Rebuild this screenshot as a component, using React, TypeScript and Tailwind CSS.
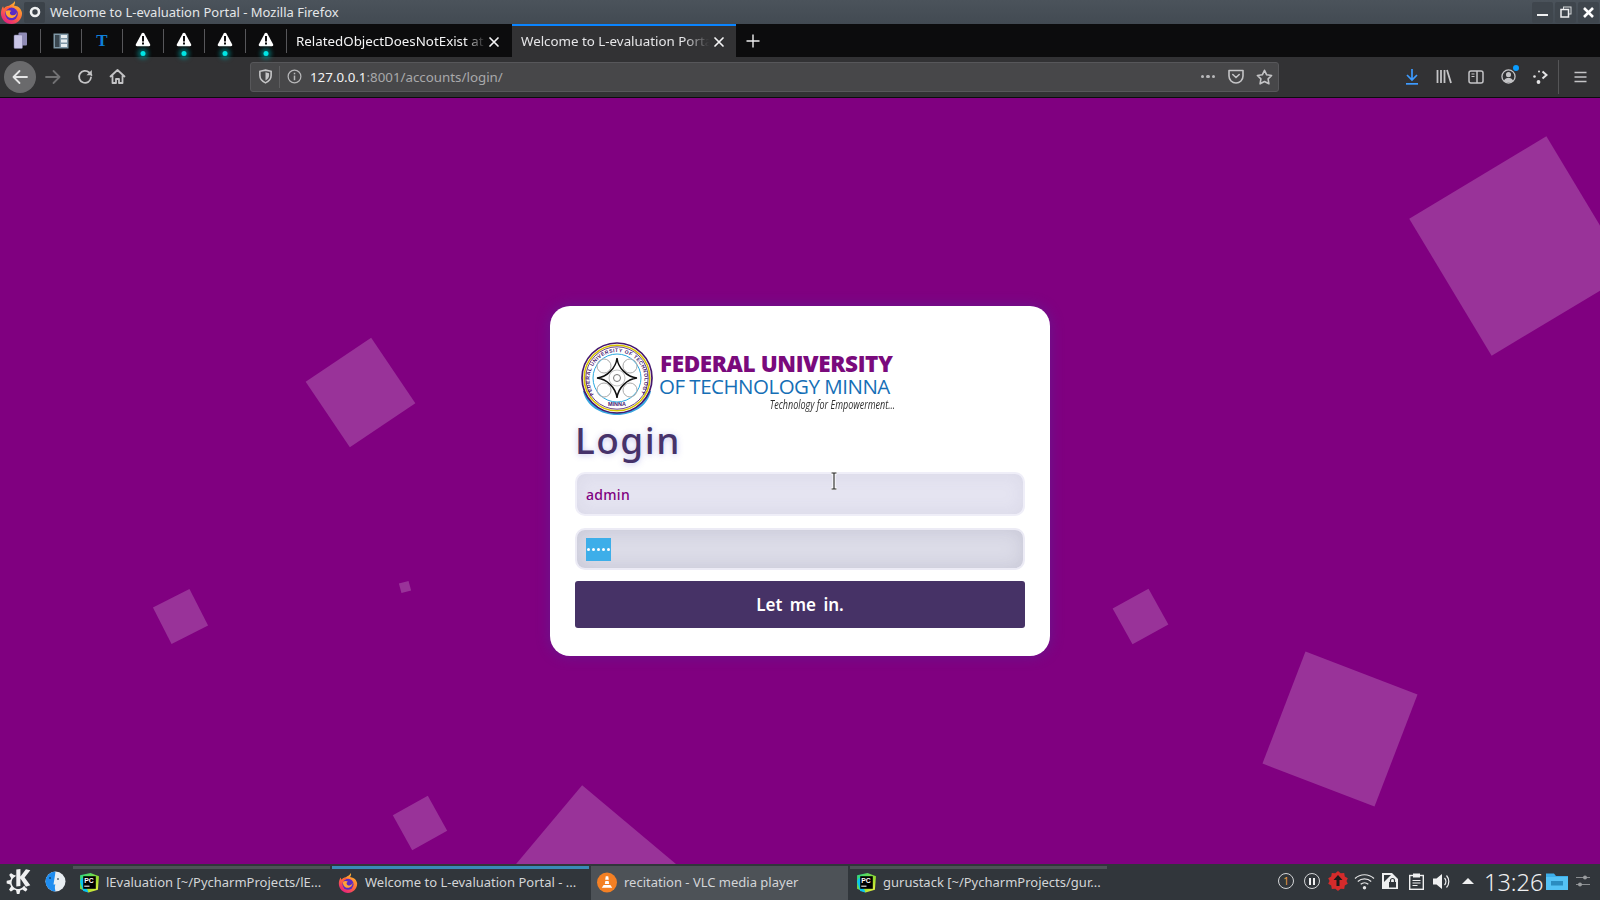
import React from "react";
import { SiKde } from "react-icons/si";

const ui = "font-['Noto_Sans',sans-serif]";

function FirefoxLogo({ size = 22, id = "a" }: { size?: number; id?: string }) {
  return (
    <svg width={size} height={size} viewBox="0 0 24 24">
      <defs>
        <linearGradient id={`ff${id}`} x1="0.8" y1="0" x2="0.2" y2="1">
          <stop offset="0" stopColor="#ffbd2e" />
          <stop offset="0.5" stopColor="#ff7139" />
          <stop offset="1" stopColor="#e31587" />
        </linearGradient>
      </defs>
      <path d="M15.500 0c.6 2.500-.3 3.700-1 4.700 3 .6 5.200 1.300 6.600 3.300.9 1.300 1.900 3.200 1.900 5C23 19 18 24 12 24 6 24 1 19 1 13c0-2.600.7-5.400 2.200-7.500l.9 2.500C5.500 6 7.500 5 9.500 5 11.500 3.500 14.500 2.500 15.500 0z" fill={`url(#ff${id})`} />
      <circle cx="12" cy="13.500" r="6.600" fill="#5a2bc4" />
      <path d="M6 10.500c2.200-1.300 4.500-1 6 0-1 .4-1.700 1-1.700 2 0 1.700 2 2.600 3.700 2.400 2-.2 3.200-1.700 3.300-3.400.6 3.300-2 6.300-5.500 6.300-3.500 0-6.300-3-5.800-7.300z" fill="#ffa436" />
      <path d="M4.500 8c2-2 5-2.500 7.500-1.500-2.500.3-4.500 1.500-5.500 4C5.800 10 5 9 4.500 8z" fill="#ff5e3a" />
    </svg>
  );
}

function Separator() {
  return <div className="w-px h-[24px] bg-[#57575a] shrink-0" />;
}

function AlertTab() {
  return (
    <div className="relative w-[40px] h-full flex items-center justify-center">
      <svg width="16" height="17" viewBox="0 0 16 16" className="mb-[3px] mr-[1px]">
        <path d="M8 1.200c.6 0 1 .3 1.300.8l5.800 10.800c.5 1-.1 2-1.200 2H2.100c-1.100 0-1.700-1-1.200-2L6.700 2c.3-.5.700-.8 1.300-.8z" fill="#fff" />
        <rect x="7" y="4.500" width="2" height="5.500" fill="#0c0c0d" />
        <rect x="7" y="11" width="2" height="2" fill="#0c0c0d" />
      </svg>
      <span className="absolute bottom-[1px] left-1/2 -translate-x-1/2 w-[5px] h-[5px] rounded-full bg-[#00e5e5] shadow-[0_0_4px_3px_rgba(0,160,160,0.55)]" />
    </div>
  );
}

function CloseX() {
  return (
    <svg width="12" height="12" viewBox="0 0 12 12" className="shrink-0">
      <path d="M2 2l8 8M10 2l-8 8" stroke="#f4f4f5" strokeWidth="1.700" strokeLinecap="round" />
    </svg>
  );
}

function TitleBar() {
  return (
    <div className="h-[24px] flex items-center bg-gradient-to-b from-[#4b535b] to-[#424a52] relative">
      <div className="w-[23px] flex justify-center">
        <FirefoxLogo size={23} id="title" />
      </div>
      <div className="w-[21px] h-[21px] ml-[1px] rounded-[2px] bg-[#3b4249] flex items-center justify-center">
        <svg width="14" height="14" viewBox="0 0 14 14">
          <circle cx="7" cy="7" r="4" fill="none" stroke="#eff0f1" strokeWidth="2.600" />
          <path d="M9 2l3 3-2 1z" fill="#eff0f1" />
        </svg>
      </div>
      <span className="ml-[5px] mt-[1px] text-[13px] text-[#e4e6e8] whitespace-nowrap">Welcome to L-evaluation Portal - Mozilla Firefox</span>
      <div className="ml-auto flex items-center gap-[2px] pr-[1px]">
        <div className="w-[21px] h-[21px] rounded-[2px] bg-[#3f464d] flex items-center justify-center">
          <div className="w-[11px] h-[2px] bg-[#eff0f1] mt-[6px]" />
        </div>
        <div className="w-[21px] h-[21px] rounded-[2px] bg-[#3f464d] flex items-center justify-center">
          <svg width="12" height="12" viewBox="0 0 12 12">
            <rect x="3.500" y="1" width="7.500" height="7" fill="none" stroke="#d7d9db" />
            <rect x="1" y="3.500" width="7.500" height="7.500" fill="#3f464d" stroke="#eff0f1" strokeWidth="1.500" />
          </svg>
        </div>
        <div className="w-[21px] h-[21px] rounded-[2px] bg-[#3f464d] flex items-center justify-center">
          <svg width="13" height="13" viewBox="0 0 13 13">
            <path d="M2 2l9 9M11 2l-9 9" stroke="#fff" strokeWidth="2.600" />
          </svg>
        </div>
      </div>
    </div>
  );
}

function TabBar() {
  return (
    <div className="h-[33px] flex items-center bg-[#0c0c0d]">
      <div className="w-[40px] h-full flex items-center justify-center">
        <svg width="15" height="17" viewBox="0 0 15 17">
          <rect x="5.500" y="0.500" width="8.500" height="13" rx="1" fill="#8f8bb5" />
          <rect x="1" y="3" width="8.500" height="13.500" rx="1" fill="#c9c5e6" stroke="#75719a" strokeWidth="0.500" />
        </svg>
      </div>
      <Separator />
      <div className="w-[40px] h-full flex items-center justify-center">
        <svg width="16" height="16" viewBox="0 0 16 16">
          <rect x="0.500" y="0.500" width="15" height="15" fill="#7f97a6" />
          <rect x="2" y="2" width="4.500" height="12" fill="#3a4750" />
          <rect x="8" y="2" width="6" height="3" fill="#e7edf0" />
          <rect x="8" y="6.500" width="6" height="3" fill="#e7edf0" />
          <rect x="8" y="11" width="6" height="3" fill="#e7edf0" />
        </svg>
      </div>
      <Separator />
      <div className="w-[40px] h-full flex items-center justify-center">
        <span className="font-['Liberation_Serif',serif] font-bold text-[17px] leading-none text-[#0f7fd8]">T</span>
      </div>
      <Separator />
      <AlertTab />
      <Separator />
      <AlertTab />
      <Separator />
      <AlertTab />
      <Separator />
      <AlertTab />
      <Separator />
      <div className="w-[225px] h-full flex items-center pl-[9px] pr-[12px] pt-[2px]">
        <span className="w-[192px] overflow-hidden whitespace-nowrap text-[13.33px] text-[#f4f4f5] [mask-image:linear-gradient(to_right,black_88%,transparent_99%)]">RelatedObjectDoesNotExist at /accounts</span>
        <CloseX />
      </div>
      <div className="w-[224px] h-full flex items-center pl-[9px] pr-[10px] bg-[#323234] border-t-[2px] border-[#0a84ff]">
        <span className="w-[192px] overflow-hidden whitespace-nowrap text-[13.33px] text-[#e6e6e8] [mask-image:linear-gradient(to_right,black_85%,transparent_98%)]">Welcome to L-evaluation Portal</span>
        <CloseX />
      </div>
      <div className="w-[33px] h-full flex items-center justify-center pl-[1px]">
        <svg width="14" height="14" viewBox="0 0 14 14">
          <path d="M7 0.500v13M0.500 7h13" stroke="#eeeeef" strokeWidth="1.400" />
        </svg>
      </div>
    </div>
  );
}

function ToolIcon({ children, w = 32 }: { children: React.ReactNode; w?: number }) {
  return (
    <div className="flex items-center justify-center h-full shrink-0" style={{ width: w }}>
      {children}
    </div>
  );
}

function ToolBar() {
  const s = { fill: "none", stroke: "#c4c4c6", strokeWidth: 1.8, strokeLinecap: "round" as const, strokeLinejoin: "round" as const };
  return (
    <div className="h-[40px] flex items-center bg-[#323234] border-b-[1px] border-[#323234]">
      <div className="w-[4px]" />
      <div className="w-[32px] h-[32px] rounded-full bg-[#6a6a6c] flex items-center justify-center">
        <svg width="18" height="18" viewBox="0 0 18 18">
          <path d="M16 9H2.500M8.500 3L2.500 9l6 6" fill="none" stroke="#e6e6e7" strokeWidth="1.800" strokeLinecap="round" strokeLinejoin="round" />
        </svg>
      </div>
      <div className="w-[1px]" />
      <ToolIcon>
        <svg width="18" height="18" viewBox="0 0 18 18">
          <path d="M2 9h13.500M9.500 3l6 6-6 6" {...s} stroke="#717173" />
        </svg>
      </ToolIcon>
      <ToolIcon>
        <svg width="18" height="18" viewBox="0 0 18 18">
          <path d="M15 9.500a6 6 0 1 1-1.800-5L15.500 7" {...s} />
          <path d="M15.800 2v5.300h-5.300" fill="#c4c4c6" stroke="none" />
        </svg>
      </ToolIcon>
      <ToolIcon>
        <svg width="17" height="17" viewBox="0 0 17 17">
          <path d="M1.500 8.500l7-6.500 7 6.500M3.500 7.500V15h3.500v-4h3v4h3.500V7.500" {...s} />
        </svg>
      </ToolIcon>
      <div className="w-[117px]" />
      <div className="w-[1029px] h-[30px] rounded-[3px] bg-[#474749] border border-[#57575a] flex items-center">
        <div className="w-[28px] flex justify-center">
          <svg width="15" height="15" viewBox="0 0 16 16">
            <path d="M8 1.200l6 1.300v4.500c0 3.800-2.700 6.300-6 7.800-3.300-1.500-6-4-6-7.800V2.500z" fill="none" stroke="#c4c4c6" strokeWidth="1.700" />
            <path d="M8 3.500l3.800.9V7c0 2.500-1.700 4.200-3.800 5.200z" fill="#c4c4c6" />
          </svg>
        </div>
        <div className="w-px h-[22px] bg-[#5e5e60]" />
        <div className="w-[29px] flex justify-center">
          <svg width="15" height="15" viewBox="0 0 16 16">
            <circle cx="8" cy="8" r="6.800" fill="none" stroke="#b8b8ba" strokeWidth="1.300" />
            <rect x="7.200" y="7" width="1.600" height="5" fill="#b8b8ba" />
            <rect x="7.200" y="4" width="1.600" height="1.700" fill="#b8b8ba" />
          </svg>
        </div>
        <span className="ml-[1px] mt-[3px] text-[13.33px] whitespace-nowrap text-[#a9a9ab]">
          <span className="text-[#f2f2f3]">127.0.0.1</span>:8001/accounts/login/
        </span>
        <div className="ml-auto flex items-center">
          <div className="w-[28px] flex justify-center gap-[2px]">
            <i className="w-[3.500px] h-[3.500px] rounded-full bg-[#b8b8ba]" />
            <i className="w-[3.500px] h-[3.500px] rounded-full bg-[#b8b8ba]" />
            <i className="w-[3.500px] h-[3.500px] rounded-full bg-[#b8b8ba]" />
          </div>
          <div className="w-[28px] flex justify-center">
            <svg width="16" height="15" viewBox="0 0 16 15">
              <path d="M1 1.500h14v5.500a7 7 0 0 1-14 0z" fill="none" stroke="#c4c4c6" strokeWidth="1.600" strokeLinejoin="round" />
              <path d="M4.800 5.500L8 8.500l3.200-3" fill="none" stroke="#c4c4c6" strokeWidth="1.600" strokeLinecap="round" />
            </svg>
          </div>
          <div className="w-[28px] flex justify-center">
            <svg width="17" height="16" viewBox="0 0 17 16">
              <path d="M8.500 1.300l2.200 4.500 4.900.7-3.500 3.400.8 4.900-4.400-2.300-4.400 2.300.8-4.900L1.400 6.500l4.900-.7z" fill="none" stroke="#c4c4c6" strokeWidth="1.600" strokeLinejoin="round" />
            </svg>
          </div>
        </div>
      </div>
      <div className="w-[117px]" />
      <ToolIcon>
        <svg width="16" height="17" viewBox="0 0 16 17">
          <path d="M8 1v10.500M3 7l5 5 5-5" fill="none" stroke="#3d9bff" strokeWidth="1.700" />
          <rect x="2" y="15" width="12" height="1.700" fill="#3d9bff" />
        </svg>
      </ToolIcon>
      <ToolIcon>
        <svg width="16" height="15" viewBox="0 0 16 15">
          <path d="M1.500 1v13M5 1v13M8.500 1v13M11 1l4 13" fill="none" stroke="#c4c4c6" strokeWidth="1.800" />
        </svg>
      </ToolIcon>
      <ToolIcon>
        <svg width="16" height="14" viewBox="0 0 16 14">
          <rect x="1" y="1" width="14" height="12" rx="2" fill="none" stroke="#c4c4c6" strokeWidth="1.500" />
          <path d="M9 1v12" stroke="#c4c4c6" strokeWidth="1.500" />
          <path d="M3.500 4h3M3.500 6.500h3" stroke="#c4c4c6" strokeWidth="1.200" />
        </svg>
      </ToolIcon>
      <ToolIcon>
        <div className="relative">
          <svg width="15" height="15" viewBox="0 0 16 16" className="block">
            <circle cx="8" cy="8" r="7" fill="none" stroke="#c4c4c6" strokeWidth="1.400" />
            <circle cx="8" cy="6" r="2.700" fill="#c4c4c6" />
            <path d="M3 12.500c1-2.500 3-3 5-3s4 .5 5 3c-1.300 1.300-3 2-5 2s-3.700-.7-5-2z" fill="#c4c4c6" />
          </svg>
          <span className="absolute right-[-3px] top-[-4px] w-[6px] h-[6px] rounded-full bg-[#0a9dff]" />
        </div>
      </ToolIcon>
      <ToolIcon>
        <svg width="16" height="16" viewBox="0 0 16 16">
          <path d="M10.500 2.500L14.500 6l-4 3.500" fill="none" stroke="#e4e4e5" strokeWidth="2" />
          <circle cx="2.500" cy="7.500" r="1.300" fill="#e4e4e5" />
          <circle cx="7" cy="2.500" r="1" fill="#e4e4e5" />
          <circle cx="6.500" cy="13" r="1.900" fill="#e4e4e5" />
        </svg>
      </ToolIcon>
      <div className="w-[2px]" />
      <div className="w-px h-[34px] bg-[#555557]" />
      <div className="flex-1 flex justify-center pl-[2px]">
        <svg width="13" height="12" viewBox="0 0 13 12">
          <path d="M0.500 1.500h12M0.500 6h12M0.500 10.500h12" stroke="#c4c4c6" strokeWidth="1.500" />
        </svg>
      </div>
    </div>
  );
}

const squares = [
  { cx: 1519, cy: 246, s: 160, r: -31 },
  { cx: 360, cy: 392, s: 79, r: -34 },
  { cx: 180, cy: 616, s: 41, r: -27 },
  { cx: 405, cy: 587, s: 10, r: -15 },
  { cx: 1140, cy: 616, s: 41, r: -29 },
  { cx: 1340, cy: 729, s: 120, r: 21 },
  { cx: 420, cy: 823, s: 40, r: -29 },
  { cx: 592, cy: 898, s: 160, r: 40 },
];

function Seal() {
  return (
    <svg width="76" height="76" viewBox="0 0 76 76" className="shrink-0">
      <defs>
        <path id="sealTop" d="M16 55A27.500 27.500 0 1 1 60 55" />
      </defs>
      <path d="M4 50c3 15 18 24 34 24s31-9 34-24l-3 0c-5 13-19 20-31 20S12 63 7 50z" fill="#37a6e0" />
      <circle cx="38" cy="37" r="35" fill="#fff" stroke="#46186e" strokeWidth="1.700" />
      <circle cx="38" cy="37" r="32.800" fill="none" stroke="#d8c400" strokeWidth="1.600" />
      <circle cx="38" cy="37" r="31.200" fill="none" stroke="#46186e" strokeWidth="0.800" />
      <text fontSize="5" fill="#46186e" fontFamily="'Liberation Sans',sans-serif" fontWeight="700" letterSpacing="0.500">
        <textPath href="#sealTop" startOffset="2">FEDERAL UNIVERSITY OF TECHNOLOGY</textPath>
      </text>
      <text x="38" y="65" fontSize="5.500" textAnchor="middle" fill="#46186e" fontWeight="700" fontFamily="'Liberation Sans',sans-serif">MINNA</text>
      <circle cx="38" cy="37" r="24" fill="#fff" stroke="#29a9e0" strokeWidth="1" />
      <circle cx="25" cy="25" r="7" fill="none" stroke="#aaa" strokeWidth="1" />
      <circle cx="51" cy="25" r="7" fill="none" stroke="#aaa" strokeWidth="1" />
      <circle cx="25" cy="49" r="7" fill="none" stroke="#aaa" strokeWidth="1" />
      <circle cx="51" cy="49" r="7" fill="none" stroke="#aaa" strokeWidth="1" />
      <path d="M38 17c1 10 10 19 20 20-10 1-19 10-20 20-1-10-10-19-20-20 10-1 19-10 20-20z" fill="#fff" stroke="#111" strokeWidth="1.500" />
      <circle cx="38" cy="37" r="3.500" fill="none" stroke="#777" strokeWidth="1" />
      <path d="M30 37a8 8 0 0 1 16 0a8 8 0 0 1-16 0" fill="none" stroke="#999" strokeWidth="0.600" />
    </svg>
  );
}

function LoginCard() {
  return (
    <div className="relative w-[500px] h-[350px] bg-white rounded-[20px] px-[25px] shadow-[0_0_14px_rgba(70,50,160,0.45)] flex flex-col">
      <div className="h-[76px] mt-[35px] ml-[4px] flex items-start">
        <Seal />
        <div className="ml-[5px] w-[240px] flex flex-col font-['Open_Sans',sans-serif]">
          <span className="mt-[11px] h-[24px] leading-[24px] text-[22.500px] font-extrabold tracking-[-0.400px] text-[#7a0a7c] whitespace-nowrap">FEDERAL UNIVERSITY</span>
          <span className="h-[20px] leading-[20px] ml-[-1px] text-[20.500px] tracking-[-0.500px] text-[#166fb6] font-medium whitespace-nowrap">OF TECHNOLOGY MINNA</span>
          <span className="h-[14px] mt-[2px] leading-[14px] self-end mr-[5px] origin-right scale-x-[0.75] text-[12px] italic text-[#2e2e2e] whitespace-nowrap">Technology for Empowerment...</span>
        </div>
      </div>
      <h1 className={`${ui} h-[56px] mt-[-1px] leading-[48px] text-[37px] font-medium tracking-[1.500px] text-[#46326a] [text-shadow:0_1px_6px_rgba(90,80,200,0.35)]`}>Login</h1>
      <div className={`${ui} h-[44px] rounded-[10px] bg-[#e5e4f1] border-[2px] border-[#efeef8] shadow-[inset_0_0_18px_rgba(120,120,160,0.1)] flex items-center pl-[9px] pt-[1px] text-[14px] font-medium tracking-[0.300px] text-[#800080]`}>admin</div>
      <div className={`${ui} h-[42px] mt-[12px] rounded-[10px] bg-[#dcdce8] border-[2px] border-[#ecebf5] shadow-[inset_0_0_18px_rgba(90,90,120,0.16)] flex items-center pl-[9px]`}>
        <span className="w-[25px] h-[23px] bg-[#3daee9] flex items-center justify-center gap-[2px] pt-[1px]">
          <i className="w-[3px] h-[3px] rounded-full bg-white" />
          <i className="w-[3px] h-[3px] rounded-full bg-white" />
          <i className="w-[3px] h-[3px] rounded-full bg-white" />
          <i className="w-[3px] h-[3px] rounded-full bg-white" />
          <i className="w-[3px] h-[3px] rounded-full bg-white" />
        </span>
      </div>
      <div className={`${ui} h-[47px] mt-[11px] rounded-[3px] bg-[#463266] flex items-center justify-center text-white text-[17px] font-semibold [word-spacing:3px]`}>Let me in.</div>
      <svg width="8" height="18" viewBox="0 0 8 18" className="absolute left-[280px] top-[166px]">
        <path d="M1 1h6M1 17h6M4 1v16" stroke="#fff" strokeWidth="3" />
        <path d="M1.500 1h5M1.500 17h5M4 1v16" stroke="#222" strokeWidth="1.100" />
      </svg>
    </div>
  );
}

function PyCharm({ id }: { id: string }) {
  return (
    <svg width="21" height="21" viewBox="0 0 20 20" className="shrink-0">
      <defs>
        <linearGradient id={`pcg${id}`} x1="0" y1="0" x2="1" y2="1">
          <stop offset="0" stopColor="#21d789" />
          <stop offset="0.6" stopColor="#9bdc2d" />
          <stop offset="1" stopColor="#fcf84a" />
        </linearGradient>
      </defs>
      <path d="M1 3L11 1l8 3-1 13-9 2.500L1 16z" fill={`url(#pcg${id})`} />
      <path d="M1 9l3 9 5 1.500L3 5z" fill="#07c3f2" />
      <rect x="4" y="4" width="12" height="12" fill="#000" />
      <text x="5" y="10.500" fontSize="6.500" fontWeight="700" fill="#fff" fontFamily="'Liberation Sans',sans-serif">PC</text>
      <rect x="5" y="13" width="5" height="1" fill="#fff" />
    </svg>
  );
}

function TaskItem({ icon, text, bar, bg }: { icon: React.ReactNode; text: string; bar?: string; bg?: string }) {
  return (
    <div className={`w-[257px] h-full flex flex-col shrink-0 ${bg ?? ""}`}>
      <div className={`h-[3px] ${bar ?? ""}`} />
      <div className="flex-1 flex items-center pl-[6px] pb-[4px]">
        <div className="w-[20px] flex justify-center">{icon}</div>
        <span className="ml-[7px] text-[13px] text-[#d3d5d7] whitespace-nowrap">{text}</span>
      </div>
    </div>
  );
}

function TaskBar() {
  return (
    <div className="h-[36px] bg-[#31363b] flex items-stretch pt-[2px] relative">
      <div className="w-[37px] flex items-center justify-center text-[#eff0f1] pb-[4px]">
        <SiKde size={25} />
      </div>
      <div className="w-[36px] flex items-center justify-center pb-[4px]">
        <svg width="21" height="21" viewBox="0 0 21 21">
          <circle cx="10.500" cy="10.500" r="10" fill="#e8eef2" />
          <path d="M10.500 .5a10 10 0 0 0 0 20c-1-4-.7-6 0-7H8.500c.7-4 1.500-9 2-13z" fill="#1e8df0" />
          <path d="M13 7v2M5 6v2" stroke="#123" strokeWidth="1" />
        </svg>
      </div>
      <div className="flex gap-[2px] h-full">
        <TaskItem icon={<PyCharm id="one" />} text="lEvaluation [~/PycharmProjects/lE..." bar="bg-[#4d5257]" />
        <TaskItem icon={<FirefoxLogo size={22} id="task" />} text="Welcome to L-evaluation Portal - ..." bar="bg-[#3a8ab8]" />
        <TaskItem
          bg="bg-[#4d5257]"
          icon={
            <svg width="21" height="21" viewBox="0 0 21 21">
              <circle cx="10.500" cy="10.500" r="10.500" fill="#f48024" />
              <path d="M9.200 4h2.600l.6 3.500h-3.800zM8.800 9h3.400l.6 3H8.200zM7 13h7l2 3H5z" fill="#fff" />
            </svg>
          }
          text="recitation - VLC media player"
        />
        <TaskItem icon={<PyCharm id="two" />} text="gurustack [~/PycharmProjects/gur..." bar="bg-[#4d5257]" />
      </div>
      <div className="flex-1 flex items-center pb-[4px]">
        <div className="ml-[166px] w-[26px] flex justify-center">
          <div className="w-[16px] h-[16px] rounded-full border border-[#d3d5d7] flex items-center justify-center text-[10px] leading-none text-[#f0a040]">1</div>
        </div>
        <div className="w-[26px] flex justify-center">
          <div className="w-[16px] h-[16px] rounded-full border border-[#d3d5d7] flex items-center justify-center gap-[2px]">
            <i className="w-[2px] h-[7px] bg-[#eff0f1]" />
            <i className="w-[2px] h-[7px] bg-[#eff0f1]" />
          </div>
        </div>
        <div className="w-[26px] flex justify-center">
          <svg width="20" height="20" viewBox="0 0 20 20">
            <path d="M10 0l2.700 2.300 3.500-.3.600 3.400 3 1.900L18.500 10l1.300 2.700-3 1.900-.6 3.400-3.500-.3L10 20l-2.700-2.300-3.500.3-.6-3.400-3-1.900L1.500 10 .2 7.300l3-1.900.6-3.400 3.500.3z" fill="#d42b2b" />
            <path d="M10 4l4.500 5h-3v6h-3V9h-3z" fill="#1b1b1b" />
          </svg>
        </div>
        <div className="w-[26px] flex justify-center">
          <svg width="21" height="17" viewBox="0 0 21 17">
            <path d="M1 5.500c5.300-5 13.700-5 19 0M3.800 8.500c3.800-3.500 9.600-3.500 13.400 0M6.700 11.300c2.200-2 5.400-2 7.600 0" fill="none" stroke="#e4e5e6" strokeWidth="1.200" />
            <circle cx="10.500" cy="14.700" r="1.700" fill="#e4e5e6" />
          </svg>
        </div>
        <div className="w-[26px] flex justify-center">
          <svg width="16" height="16" viewBox="0 0 16 16">
            <path d="M0 0h10l6 6v10H0z" fill="#eff0f1" />
            <path d="M2 2h7L2 9z" fill="#31363b" />
            <rect x="7" y="9" width="7" height="5.500" fill="#31363b" />
            <path d="M8.500 9V7.500a2 2 0 0 1 4 0V9" fill="none" stroke="#31363b" strokeWidth="1.200" />
          </svg>
        </div>
        <div className="w-[26px] flex justify-center">
          <svg width="15" height="17" viewBox="0 0 15 17">
            <rect x="0.700" y="2.500" width="13.600" height="13.800" fill="none" stroke="#eff0f1" strokeWidth="1.400" />
            <rect x="4" y="0.500" width="7" height="4" fill="#eff0f1" />
            <path d="M3.500 7.500h8M3.500 10h8M3.500 12.500h5" stroke="#eff0f1" strokeWidth="1.200" />
          </svg>
        </div>
        <div className="w-[26px] flex justify-center">
          <svg width="18" height="17" viewBox="0 0 18 17">
            <path d="M0 5.500h3.500L9 1v15l-5.500-4.500H0z" fill="#eff0f1" />
            <path d="M11.500 5a5 5 0 0 1 0 7M13.500 2.500a9 9 0 0 1 0 12" fill="none" stroke="#eff0f1" strokeWidth="1.200" />
          </svg>
        </div>
        <div className="w-[26px] flex justify-center">
          <svg width="12" height="6" viewBox="0 0 12 6">
            <path d="M6 0l6 6H0z" fill="#eff0f1" />
          </svg>
        </div>
        <span className="ml-[3px] mt-[3px] w-[58px] text-[23.500px] leading-none text-[#eff0f1] font-light whitespace-nowrap">13:26</span>
        <div className="ml-[3px] w-[24px] flex justify-center">
          <svg width="22" height="18" viewBox="0 0 22 18">
            <path d="M0 1.500h8l2 2.500h12v14H0z" fill="#3daee9" />
            <rect x="0" y="5" width="22" height="13" fill="#54c2f5" />
            <rect x="5" y="9" width="12" height="4.500" fill="#2b8cc0" />
          </svg>
        </div>
        <div className="ml-[3px] w-[22px] flex justify-center">
          <svg width="14" height="12" viewBox="0 0 14 12">
            <path d="M0 2.500h14M0 9.500h14" stroke="#8a8d90" strokeWidth="1" />
            <circle cx="9" cy="2.500" r="2" fill="#9a9d9f" />
            <circle cx="4" cy="9.500" r="2" fill="#9a9d9f" />
          </svg>
        </div>
      </div>
    </div>
  );
}

export default function App() {
  return (
    <div className={`${ui} w-[1600px] h-[900px] overflow-hidden flex flex-col bg-[#800080]`}>
      <TitleBar />
      <TabBar />
      <ToolBar />
      <div className="h-px bg-[#0c0c0d]" />
      <main className="relative flex-1 overflow-hidden bg-[#800080] flex items-center justify-center">
        {squares.map((q, i) => (
          <div
            key={i}
            className="absolute bg-white/20"
            style={{
              width: q.s,
              height: q.s,
              left: q.cx - q.s / 2,
              top: q.cy - 98 - q.s / 2,
              transform: `rotate(${q.r}deg)`,
            }}
          />
        ))}
        <LoginCard />
      </main>
      <TaskBar />
    </div>
  );
}
